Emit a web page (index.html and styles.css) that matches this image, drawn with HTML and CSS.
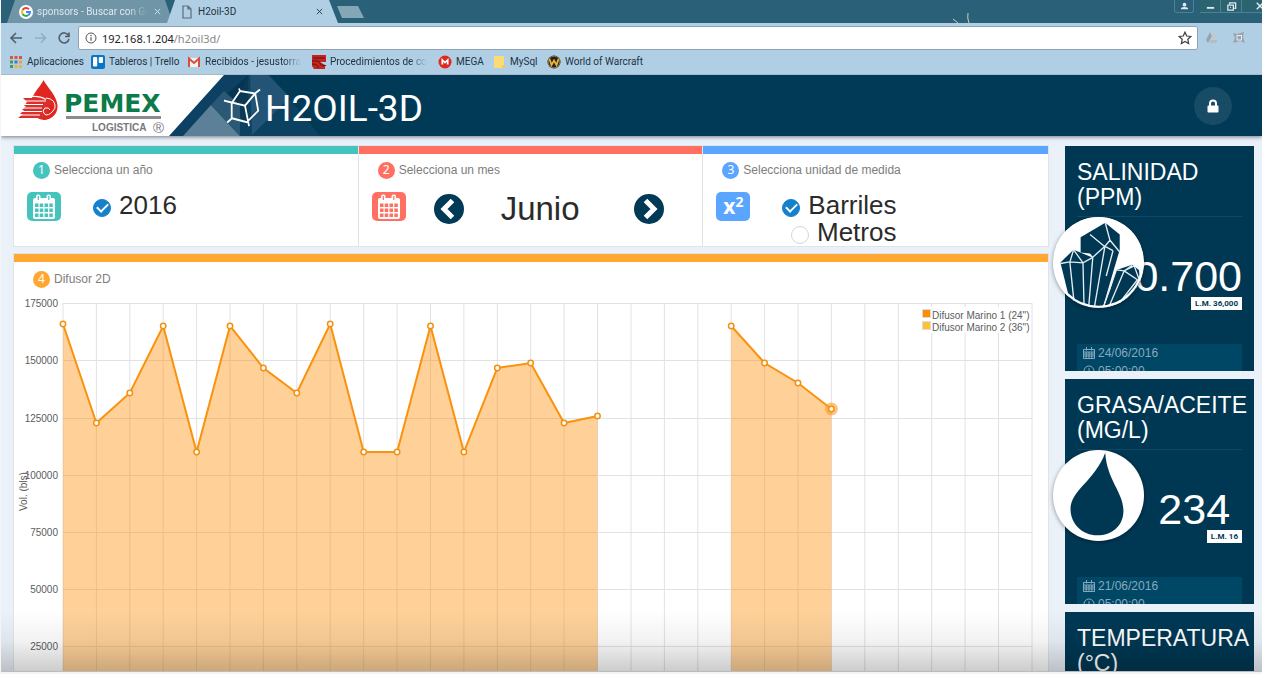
FILE: index.html
```html
<!DOCTYPE html>
<html lang="es">
<head>
<meta charset="utf-8">
<title>H2oil-3D</title>
<link rel="stylesheet" href="styles.css">
</head>
<body>
<div class="window">
  <header class="browser">
    <div class="tabstrip">
      <div class="tab tab-idle">
        <svg class="tab-icon" viewBox="0 0 14 14"><circle cx="7" cy="7" r="7" fill="#fff"/><g fill="none" stroke-width="2"><path d="M10 4.200A4 4 0 0 0 3.600 5" stroke="#ea4335"/><path d="M3.600 5A4 4 0 0 0 3.600 9" stroke="#fbbc05"/><path d="M3.600 9A4 4 0 0 0 9.500 10" stroke="#34a853"/><path d="M9.500 10A4 4 0 0 0 11 7H7" stroke="#4285f4"/></g></svg>
        <span class="tab-title fade">sponsors - Buscar con Go</span>
        <button class="tab-close" aria-label="Cerrar pestaña"><svg viewBox="0 0 8 8"><path d="M1 1l6 6M7 1L1 7"/></svg></button>
      </div>
      <div class="tab tab-active">
        <svg class="tab-icon" viewBox="0 0 14 14"><path d="M3 1h5l3 3v9H3zM8 1v3h3" fill="none" stroke="#5b6c78" stroke-width="1.200"/></svg>
        <span class="tab-title">H2oil-3D</span>
        <button class="tab-close" aria-label="Cerrar pestaña"><svg viewBox="0 0 8 8"><path d="M1 1l6 6M7 1L1 7"/></svg></button>
      </div>
      <button class="tab-new" aria-label="Nueva pestaña"></button>
      <svg class="spark" viewBox="0 0 70 10"><path d="M1 6l5 4M16 0q-1 5 1 10" fill="none" stroke="#c9d3b4"/></svg>
      <div class="win-buttons">
        <button class="win user" aria-label="Usuario"><svg viewBox="0 0 12 12"><circle cx="6" cy="4" r="2" fill="#dfe9ee"/><path d="M2 9q0-2.500 4-2.500T10 9z" fill="#dfe9ee"/></svg></button>
        <button class="win" aria-label="Minimizar"><svg viewBox="0 0 12 12"><path d="M2 7.500h8" stroke="#dfe9ee" stroke-width="2"/></svg></button>
        <button class="win" aria-label="Restaurar"><svg viewBox="0 0 12 12"><path d="M4 3.500V2h6.500v6H9M2 4.500h6v5.500H2zM4.500 7h1" fill="none" stroke="#dfe9ee" stroke-width="1.400"/></svg></button>
        <button class="win last" aria-label="Cerrar"><svg viewBox="0 0 12 12"><path d="M3 2l7 7M10 2L3 9" stroke="#dfe9ee" stroke-width="1.600"/></svg></button>
      </div>
    </div>
    <div class="toolbar">
      <button class="nav" aria-label="Atrás"><svg viewBox="0 0 14 14"><path d="M13 7H2M7 2L2 7l5 5" stroke="#53606a"/></svg></button>
      <button class="nav" aria-label="Adelante"><svg viewBox="0 0 14 14"><path d="M2 7h10M8 2.500L12.500 7 8 11.500" stroke="#92adc2"/></svg></button>
      <button class="nav" aria-label="Recargar"><svg viewBox="0 0 14 14"><path d="M11.500 4.500A5 5 0 1 0 12 8M12 1.500v4H8" stroke="#53606a"/></svg></button>
      <div class="omnibox">
        <svg class="info" viewBox="0 0 12 12"><circle cx="6" cy="6" r="5" fill="none" stroke="#555"/><path d="M6 5.200v3.500M6 3v1.200" stroke="#555" stroke-width="1.200"/></svg>
        <div class="url">192.168.1.204<span>/h2oil3d/</span></div>
        <svg class="star" viewBox="0 0 12 12"><path d="M6 1l1.500 3.300 3.500.4-2.600 2.400.7 3.600L6 8.900l-3.100 1.800.7-3.600L1 4.700l3.500-.4z" fill="none" stroke="#444" stroke-width="1.100"/></svg>
      </div>
      <svg class="ext" viewBox="0 0 14 14"><path d="M5 1L1 9l2 3 4-7z" fill="#98a4ad"/><path d="M5 1h3l5 8H9z" fill="#c2c8cc"/><path d="M4 12l2-3h7l-2 3z" fill="#b5bcc2"/></svg>
      <svg class="ext" viewBox="0 0 14 14"><path d="M1 2l4 1 7-2-1 5 2 6-5-2-7 2 2-5z" fill="#98a2ae"/><rect x="5" y="4.500" width="4.500" height="4.500" fill="none" stroke="#e7edf2"/></svg>
    </div>
    <nav class="bookmarks" aria-label="Marcadores">
      <a class="bm bm-apps" href="#"><svg viewBox="0 0 14 14"><g fill="#e0533f"><path d="M1 1h3v3H1zM5.500 1h3v3h-3zM10 1h3v3h-3z"/></g><path d="M1 5.500h3v3H1z" fill="#3f9c5a"/><path d="M5.500 5.500h3v3h-3z" fill="#3b78d8"/><path d="M10 5.500h3v3h-3z" fill="#e9a23a"/><path d="M1 10h3v3H1z" fill="#3f9c5a"/><path d="M5.500 10h3v3h-3zM10 10h3v3h-3z" fill="#e9b53a"/></svg><span>Aplicaciones</span></a>
      <a class="bm bm-trello" href="#"><svg viewBox="0 0 14 14"><rect width="14" height="14" rx="2" fill="#0b76c4"/><rect x="2" y="2" width="4.200" height="9.500" rx="1" fill="#fff"/><rect x="7.800" y="2" width="4.200" height="6" rx="1" fill="#fff"/></svg><span>Tableros | Trello</span></a>
      <a class="bm bm-mail" href="#"><svg viewBox="0 0 14 14"><path d="M1 3h12v9H1z" fill="#f2f2f2"/><path d="M2 12V3.500l5 4.500 5-4.500V12" fill="none" stroke="#dd4b39" stroke-width="2"/></svg><span class="fade">Recibidos - jesustorra</span></a>
      <a class="bm bm-proc" href="#"><svg viewBox="0 0 14 14"><path d="M0 0h14v7H8l5 3v4H2L0 11z" fill="#c5241e"/><path d="M1 3h12M0 6q8-1 8 2t6 2.500M0 9q6 0 6 4" stroke="#5d1512" fill="none"/></svg><span class="fade">Procedimientos de co</span></a>
      <a class="bm bm-mega" href="#"><svg viewBox="0 0 14 14"><circle cx="7" cy="7" r="6.500" fill="#e3271f"/><path d="M4.300 9.500V5L7 7.600 9.700 5v4.500" fill="none" stroke="#fff" stroke-width="1.700"/></svg><span>MEGA</span></a>
      <a class="bm bm-sql" href="#"><svg viewBox="0 0 14 14"><path d="M2 1h10v12H2z" fill="#fbdb77"/><path d="M10 10h3v3h-3z" fill="#f3c94e"/></svg><span>MySql</span></a>
      <a class="bm bm-wow" href="#"><svg viewBox="0 0 14 14"><circle cx="7" cy="7" r="6.500" fill="#262421"/><circle cx="7" cy="7" r="5.800" fill="none" stroke="#8a7340"/><path d="M2.500 4l2 6L7 5.500 9.500 10l2-6" fill="none" stroke="#e9b340" stroke-width="1.800"/></svg><span>World of Warcraft</span></a>
    </nav>
  </header>

  <div class="app">
    <header class="app-bar">
      <svg class="brand" viewBox="1 75 264 61" role="img" aria-label="PEMEX Logística">
        <path d="M248 75h22l50 61H225z" fill="#15486a" opacity=".55"/>
        <path d="M226 75h22v52l-16-22z" fill="#0a3049" opacity=".5"/>
        <path d="M250 75h18l22 22-38 38z" fill="#336083" opacity=".6"/>
        <path d="M224 75h24L182 136h-13z" fill="#0d4163"/>
        <path d="M183 136l28-31 29 31z" fill="#5c8098"/>
        <path d="M211 105l13-14 16 14v31z" fill="#2b5874"/>
        <path d="M1 75h223l-55 61H1z" fill="#fff"/>
        <path d="M43.500 80C47 87 57 96 57.500 105.500A13.500 13.500 0 0 1 31 110C27 98 40 88 43.500 80z" fill="#e0261f"/>
        <path d="M23 98h19q9 1 11 8-8-3-6 3 2 5-5 9H18l5-4h-3l4-4h-2l4-4h-2l3-4z" fill="#d8302c"/>
        <path d="M25 97.500q13-3 21 2M24 101h22M23 104.500h20M22 108h20M20 111.500h22M19 115h21" fill="none" stroke="#fff" stroke-width="1.200"/>
        <path d="M46 98q10 1 9 10-4 7-9 7-5-3-1-7 4-1 5 2" fill="none" stroke="#fff"/>
        <text class="pemex" x="64" y="112">PEMEX</text>
        <path d="M66 116h95v3H66z" fill="#8b8d90"/>
        <text class="logistica" x="92" y="131">LOGISTICA</text>
        <text class="registered" x="153" y="133">®</text>
        <path d="M224 100.700l8 2L240 91l15 2.500 5-4M224 100.700l21 5 10-12M231.700 102.500v16l-4.500 4M231.700 118.300l15 4 11.500-11.500-3-17.500M245 105.700l4 20.500M247 122l-15-4M239 88.500l1 2.500" fill="none" stroke="#fff" stroke-width="1.800"/>
      </svg>
      <h1 class="app-name">H2OIL-3D</h1>
      <button class="lock" aria-label="Bloquear"><svg viewBox="0 0 12 14"><path d="M3 7V4.500a3 3 0 0 1 6 0V7" fill="none" stroke="#fff" stroke-width="2"/><rect x="0.500" y="6.500" width="11" height="7" rx="1" fill="#fff"/></svg></button>
    </header>

    <main class="content">
      <div class="main-col">
        <div class="steps">
          <section class="step teal">
            <h2 class="step-title"><span class="num">1</span>Selecciona un año</h2>
            <div class="step-body">
              <span class="tile"><svg viewBox="0 0 34 29"><g fill="#fff"><path d="M8 6q-2 0-2 2v17q0 2 2 2h18q2 0 2-2V8q0-2-2-2z"/><rect x="9" y="2.500" width="4.500" height="7" rx="2"/><rect x="19.500" y="2.500" width="4.500" height="7" rx="2"/></g><path class="cells" d="M8 11.500h3.500v3.500H8zM12.700 11.500h3.500v3.500h-3.500zM17.500 11.500h3.500v3.500h-3.500zM22.300 11.500h3.500v3.500h-3.500zM8 16.500h3.500v3.500H8zM12.700 16.500h3.500v3.500h-3.500zM17.500 16.500h3.500v3.500h-3.500zM22.300 16.500h3.500v3.500h-3.500zM8 21.500h3.500v3.500H8zM12.700 21.500h3.500v3.500h-3.500zM17.500 21.500h3.500v3.500h-3.500zM22.300 21.500h3.500v3.500h-3.500zM10.700 4h1.200v4h-1.200zM21.200 4h1.200v4h-1.200z"/></svg></span>
              <div class="options"><label class="option"><input type="radio" name="anio" checked>2016</label></div>
            </div>
          </section>
          <section class="step coral">
            <h2 class="step-title"><span class="num">2</span>Selecciona un mes</h2>
            <div class="step-body">
              <span class="tile"><svg viewBox="0 0 34 29"><g fill="#fff"><path d="M8 6q-2 0-2 2v17q0 2 2 2h18q2 0 2-2V8q0-2-2-2z"/><rect x="9" y="2.500" width="4.500" height="7" rx="2"/><rect x="19.500" y="2.500" width="4.500" height="7" rx="2"/></g><path class="cells" d="M8 11.500h3.500v3.500H8zM12.700 11.500h3.500v3.500h-3.500zM17.500 11.500h3.500v3.500h-3.500zM22.300 11.500h3.500v3.500h-3.500zM8 16.500h3.500v3.500H8zM12.700 16.500h3.500v3.500h-3.500zM17.500 16.500h3.500v3.500h-3.500zM22.300 16.500h3.500v3.500h-3.500zM8 21.500h3.500v3.500H8zM12.700 21.500h3.500v3.500h-3.500zM17.500 21.500h3.500v3.500h-3.500zM22.300 21.500h3.500v3.500h-3.500zM10.700 4h1.200v4h-1.200zM21.200 4h1.200v4h-1.200z"/></svg></span>
              <div class="month">
                <button class="arrow" aria-label="Mes anterior"><svg viewBox="0 0 30 30"><path d="M18.500 6.500L10 15l8.500 8.500"/></svg></button>
                <span class="month-name">Junio</span>
                <button class="arrow next" aria-label="Mes siguiente"><svg viewBox="0 0 30 30"><path d="M11.500 6.500L20 15l-8.500 8.500"/></svg></button>
              </div>
            </div>
          </section>
          <section class="step blue">
            <h2 class="step-title"><span class="num">3</span>Selecciona unidad de medida</h2>
            <div class="step-body">
              <span class="tile formula">x<sup>2</sup></span>
              <div class="options">
                <label class="option"><input type="radio" name="unidad" checked>Barriles</label>
                <label class="option"><input type="radio" name="unidad">Metros</label>
              </div>
            </div>
          </section>
        </div>

        <section class="step chart-card orange">
          <h2 class="step-title"><span class="num">4</span>Difusor 2D</h2>
          <svg class="chart" viewBox="14 291 1034 400" role="img" aria-label="Difusor 2D, volumen en barriles">
            <path class="grid" d="M63 303.500H1032M63 360.500H1032M63 418.500H1032M63 475.500H1032M63 532.500H1032M63 589.500H1032M63 646.500H1032M63 303V691M96.400 303V691M129.800 303V691M163.200 303V691M196.600 303V691M230 303V691M263.400 303V691M296.800 303V691M330.200 303V691M363.700 303V691M397.100 303V691M430.500 303V691M463.900 303V691M497.300 303V691M530.700 303V691M564.100 303V691M597.500 303V691M631 303V691M664.400 303V691M697.800 303V691M731.200 303V691M764.600 303V691M798 303V691M831.400 303V691M864.800 303V691M898.300 303V691M931.700 303V691M965.100 303V691M998.500 303V691M1032 303V691"/>
            <path class="area" d="M63 691V324L96.400 423L129.800 393L163.200 326L196.600 452L230 326L263.400 368L296.800 393L330.200 324L363.700 452H397.100L430.500 326L463.900 452L497.300 368L530.700 363L564.100 423L597.500 416V691zM731.200 691V326L764.600 363L798 383L831.400 409V691z"/>
            <path class="line" d="M63 324L96.400 423L129.800 393L163.200 326L196.600 452L230 326L263.400 368L296.800 393L330.200 324L363.700 452H397.100L430.500 326L463.900 452L497.300 368L530.700 363L564.100 423L597.500 416M731.200 326L764.600 363L798 383L831.400 409"/>
            <circle class="halo" cx="831.400" cy="409" r="6.500"/>
            <g class="dots"><circle cx="63" cy="324" r="2.700"/><circle cx="96.400" cy="423" r="2.700"/><circle cx="129.800" cy="393" r="2.700"/><circle cx="163.200" cy="326" r="2.700"/><circle cx="196.600" cy="452" r="2.700"/><circle cx="230" cy="326" r="2.700"/><circle cx="263.400" cy="368" r="2.700"/><circle cx="296.800" cy="393" r="2.700"/><circle cx="330.200" cy="324" r="2.700"/><circle cx="363.700" cy="452" r="2.700"/><circle cx="397.100" cy="452" r="2.700"/><circle cx="430.500" cy="326" r="2.700"/><circle cx="463.900" cy="452" r="2.700"/><circle cx="497.300" cy="368" r="2.700"/><circle cx="530.700" cy="363" r="2.700"/><circle cx="564.100" cy="423" r="2.700"/><circle cx="597.500" cy="416" r="2.700"/><circle cx="731.200" cy="326" r="2.700"/><circle cx="764.600" cy="363" r="2.700"/><circle cx="798" cy="383" r="2.700"/><circle cx="831.400" cy="409" r="2.700"/></g>
            <g class="ticks"><text x="58" y="307">175000</text><text x="58" y="364">150000</text><text x="58" y="422">125000</text><text x="58" y="479">100000</text><text x="58" y="536">75000</text><text x="58" y="593">50000</text><text x="58" y="650">25000</text></g>
            <text class="axis" transform="translate(27 511) rotate(-90)">Vol. (bls)</text>
            <g class="legend">
              <rect x="921" y="307" width="108" height="26" fill="#fff" opacity=".85"/>
              <rect x="922.500" y="309.500" width="8" height="8" fill="#ff8c00" stroke="#ddd"/><text x="932" y="319">Difusor Marino 1 (24")</text>
              <rect x="922.500" y="321.500" width="8" height="8" fill="#ffc03a" stroke="#ddd"/><text x="932" y="331">Difusor Marino 2 (36")</text>
            </g>
          </svg>
        </section>
      </div>

      <aside class="side">
        <article class="metric">
          <h2 class="metric-title">SALINIDAD (PPM)</h2>
          <svg class="medal" viewBox="0 0 270 270"><circle cx="135" cy="135" r="135" fill="#fff"/><g class="crystal"><path d="M22 135L61 97 117 120 105 268Q70 260 48 240z"/><path d="M82 60L155 17 198 52V97L178 165 148 268Q125 270 100 267L118 118 110 108 82 105z"/><path d="M188 157L235 142 255 157 258 190Q235 250 150 269L170 215z"/></g><path class="facets" d="M22 138l28-5 39 3 29-16M50 134L61 97l28 39M50 134l12 114M89 137l3 125M118 120L106 266M110 52l44 36M169 69l29 35M155 17l14 52-15 18 24 13M154 87L123 267M178 100l-20 75M154 87l-37 33M188 157l23 3 30-15M188 157L150 266M211 160l44 29M211 160l-44 104M241 145l16 44M250 187l-53 68M235 143l-24 17"/><circle cx="135" cy="135" r="131" fill="none" stroke="#fff" stroke-width="6"/></svg>
          <div class="reading"><div class="value">0.700</div><div class="limit">L.M. 36,000</div></div>
          <div class="stamp"><div><svg viewBox="0 0 12 12"><path d="M.5 2.500h11v9H.5zM.5 5h11M.5 7h11M.5 9h11M3.200 5v6.500M6 5v6.500M8.800 5v6.500M3.500 0v3.500M8.500 0v3.500"/></svg>24/06/2016</div><div><svg viewBox="0 0 12 12"><circle cx="6" cy="6" r="5"/><path d="M6 3v3.500H4"/></svg>05:00:00</div></div>
        </article>
        <article class="metric">
          <h2 class="metric-title">GRASA/ACEITE (MG/L)</h2>
          <svg class="medal" viewBox="0 0 270 270"><circle cx="135" cy="135" r="135" fill="#fff"/><path d="M155 8C160 90 209 125 209 180 209 225 175 253 131 253 88 253 52 220 52 175 52 120 125 90 155 8z" fill="#003854"/></svg>
          <div class="reading"><div class="value">234&nbsp;</div><div class="limit">L.M. 16</div></div>
          <div class="stamp"><div><svg viewBox="0 0 12 12"><path d="M.5 2.500h11v9H.5zM.5 5h11M.5 7h11M.5 9h11M3.200 5v6.500M6 5v6.500M8.800 5v6.500M3.500 0v3.500M8.500 0v3.500"/></svg>21/06/2016</div><div><svg viewBox="0 0 12 12"><circle cx="6" cy="6" r="5"/><path d="M6 3v3.500H4"/></svg>05:00:00</div></div>
        </article>
        <article class="metric">
          <h2 class="metric-title">TEMPERATURA (°C)</h2>
        </article>
      </aside>
    </main>
    <div class="shade"></div>
  </div>
</div>
</body>
</html>
```
FILE: styles.css
```css
* { box-sizing: border-box; }
body { margin: 0; font-family: "Liberation Sans", Arial, sans-serif; background: #f4f4f4; }
button { border: 0; padding: 0; margin: 0; background: none; font: inherit; }
svg { display: block; flex: none; }
h1, h2 { margin: 0; font-weight: 400; }

.window { height: 100vh; padding: 0 0 2px 1px; display: flex; flex-direction: column; overflow: hidden; }

/* Browser frame */
.browser { flex: none; background: #b0cfe4; color: #21323f; font-family: Roboto, "Noto Sans", sans-serif; border-bottom: 1px solid #a9b8c2; }
.tabstrip { display: flex; height: 23px; background: #2a6078; padding-left: 6px; overflow: hidden; }
.tab { display: flex; align-items: center; height: 23px; font-size: 10px; }
.tab-idle { width: 166px; padding: 0 12px 0 12px; background: #6f95a7; color: #dde8ee; clip-path: polygon(8px 0, 158px 0, 100% 100%, 0 100%); }
.tab-active { width: 171px; margin-left: -6px; padding: 0 15px 0 13px; background: #b0cfe4; clip-path: polygon(8px 0, 162px 0, 100% 100%, 0 100%); }
.tab-icon { width: 14px; height: 14px; margin-right: 4px; }
.tab-title { flex: 1; min-width: 0; overflow: hidden; white-space: nowrap; }
.fade { overflow: hidden; white-space: nowrap; mask-image: linear-gradient(90deg, #000 82%, transparent); }
.tab-close svg { width: 7px; height: 7px; margin-left: 6px; fill: none; stroke: currentColor; }
.tab-close { color: inherit; }
.tab-new { width: 27px; height: 12px; margin: 6px 0 0 -1px; background: #84a7b7; clip-path: polygon(0 0, 21px 0, 100% 100%, 5px 100%); }
.spark { width: 70px; height: 10px; margin: 13px 0 0 auto; }
.win-buttons { display: flex; margin-left: 152px; }
.win { width: 21px; height: 13px; display: grid; place-items: center; border: 1px solid #4b8391; border-top: 0; border-left-width: 0; background: #2b6470; }
.win svg { width: 11px; height: 11px; }
.user { width: 20px; margin-right: 6px; border-left-width: 1px; border-radius: 0 0 3px 3px; background: #2a6078; }
.last { width: 20px; padding-left: 12px; border-right: 0; overflow: hidden; }

.toolbar { display: flex; align-items: center; height: 30px; padding: 2px 16px 2px 8px; }
.nav { width: 14px; margin-right: 10px; }
.nav svg { width: 14px; height: 14px; fill: none; stroke-width: 1.600; }
.nav + .nav + .nav { margin-right: 7px; }
.omnibox { flex: 1; display: flex; align-items: center; height: 24px; margin-right: 7px; padding: 0 5px 0 6px; background: #fff; border: 1px solid #8fa5b5; border-radius: 2px; }
.info { width: 12px; height: 12px; margin-right: 5px; }
.url { flex: 1; font: 11px "Noto Sans", sans-serif; color: #222; }
.url span { color: #888; }
.star { width: 14px; height: 14px; }
.ext { width: 14px; height: 14px; margin-right: 13px; }
.ext + .ext { margin-right: 0; }

.bookmarks { display: flex; align-items: center; height: 21px; padding: 0 8px 4px; font-size: 10px; }
.bm { display: flex; align-items: center; gap: 4px; color: inherit; text-decoration: none; white-space: nowrap; }
.bm svg { width: 14px; height: 14px; }
.bm-apps { width: 82px; }
.bm-trello { width: 96px; }
.bm-mail { width: 125px; padding-right: 8px; }
.bm-proc { width: 126px; padding-right: 10px; }
.bm-mega { width: 54px; }
.bm-sql { width: 55px; }

/* Application */
.app { flex: 1; min-height: 0; position: relative; display: flex; flex-direction: column; overflow: hidden; background: #eaf1f8; border-bottom: 1px solid #b9bcbe; }
.app-bar { position: relative; z-index: 1; flex: none; display: flex; align-items: center; height: 61px; background: #003a57; box-shadow: 0 1px 4px rgba(30, 40, 60, .6); }
.brand { width: 264px; height: 61px; overflow: visible; }
.pemex { font: bold 25px "DejaVu Sans", sans-serif; fill: #0c7a49; }
.logistica { font: bold 10px "Liberation Sans", sans-serif; fill: #77797c; }
.registered { font: 15px "Liberation Sans", sans-serif; fill: #77797c; }
.app-name { position: relative; padding-top: 7px; font: 400 37px/44px Roboto, sans-serif; color: #fff; }
.lock { width: 38px; height: 38px; margin: 0 30px 0 auto; display: grid; place-items: center; border-radius: 50%; background: #184b66; }
.lock svg { width: 12px; height: 14px; }

.content { flex: 1; display: flex; gap: 17px; padding: 10px 8px 0 13px; }
.main-col { flex: 1; min-width: 0; display: flex; flex-direction: column; gap: 8px; }
.steps { display: grid; grid-template-columns: repeat(3, 1fr); }
.step { background: #fff; border-top: 8px solid var(--tone); box-shadow: 0 0 0 1px #e0e4e8; }
.steps .step { height: 100px; }
.teal { --tone: #45c4be; }
.coral { --tone: #ff7062; }
.blue { --tone: #5aa5ff; }
.orange { --tone: #ffa731; }
.step-title { display: flex; align-items: center; gap: 4px; padding: 8px 19px 0; font-size: 12px; line-height: 17px; color: #7d7d7d; }
.num { width: 17px; height: 17px; border-radius: 50%; background: var(--tone); color: #fff; text-align: center; font: 12px/16px "Noto Sans", sans-serif; }
.step-body { display: flex; align-items: flex-start; padding: 13px 13px 0; }
.tile { width: 34px; height: 29px; border-radius: 5px; background: var(--tone); color: #fff; }
.cells { fill: var(--tone); }
.formula { font: bold 21px/29px "Noto Sans", sans-serif; text-align: center; }
.formula sup { font-size: 14px; line-height: 1px; vertical-align: 7px; }
.options { display: flex; flex-direction: column; align-items: flex-end; margin-left: 32px; }
.option { display: flex; align-items: center; gap: 8px; font-size: 26px; line-height: 27px; color: #2b2b2b; }
.option input { appearance: none; width: 18px; height: 18px; margin: 4px 0 0; border: 1px solid #d5d5d5; border-radius: 50%; background: #fff; display: grid; place-items: center; }
.option input:checked { border-color: #1580cb; background: #1580cb; }
.option input:checked::before { content: ""; width: 9px; height: 5px; margin-bottom: 3px; border-left: 2px solid #fff; border-bottom: 2px solid #fff; transform: rotate(-45deg); }
.month { flex: 1; display: flex; align-items: center; gap: 37px; padding: 1px 26px 0 28px; }
.month-name { font-size: 33px; line-height: 32px; color: #2b2b2b; }
.arrow { width: 30px; height: 30px; border-radius: 50%; background: #003a57; }
.arrow svg { width: 30px; height: 30px; fill: none; stroke: #fff; stroke-width: 5; }
.next { margin-left: auto; }

.chart-card .step-title { padding-top: 9px; padding-bottom: 3px; }
.chart { width: 100%; height: auto; font-size: 10px; }
.grid { fill: none; stroke: #e2e2e2; }
.area { fill: #ff8c00; fill-opacity: .4; }
.line { fill: none; stroke: #f9920f; stroke-width: 2; }
.dots { fill: #fff; stroke: #f39113; stroke-width: 1.500; }
.halo { fill: #ff9a22; fill-opacity: .6; }
.ticks { fill: #5c5c5c; text-anchor: end; }
.axis, .legend text { fill: #5c5c5c; }

/* Readings */
.side { width: 189px; flex: none; display: flex; flex-direction: column; gap: 8px; }
.metric { position: relative; flex: none; display: flex; flex-direction: column; height: 225px; padding: 14px 12px 0; background: #003854; color: #fff; clip-path: inset(0 0 0 -20px); }
.metric-title { margin-right: -12px; font-size: 23px; line-height: 25px; }
.metric-title::after { content: ""; display: block; width: 165px; margin-top: 6px; border-top: 1px solid #0f4864; }
.medal { position: absolute; left: -12px; top: 71px; width: 91px; height: 91px; filter: drop-shadow(0 1px 2px rgba(0, 0, 0, .4)); }
.crystal { fill: #003854; }
.facets { fill: none; stroke: #e3edf2; stroke-width: 4; }
.reading { display: flex; flex-direction: column; align-items: flex-end; padding-top: 35px; }
.value { font-size: 43px; line-height: 48px; }
.limit { position: relative; margin-top: -3px; padding: 0 4px; background: #fff; color: #003854; font: bold 8px/13px Roboto, sans-serif; }
.stamp { margin-top: 34px; padding-left: 6px; background: #004766; color: #87a9bd; font-size: 12px; line-height: 18px; }
.stamp div { display: flex; align-items: center; gap: 3px; }
.stamp svg { width: 12px; height: 12px; fill: none; stroke: currentColor; }

.shade { position: absolute; inset: auto 0 0; height: 60px; background: linear-gradient(transparent, rgba(0, 0, 0, .05) 50%, rgba(0, 0, 0, .2)); pointer-events: none; z-index: 2; }
```
